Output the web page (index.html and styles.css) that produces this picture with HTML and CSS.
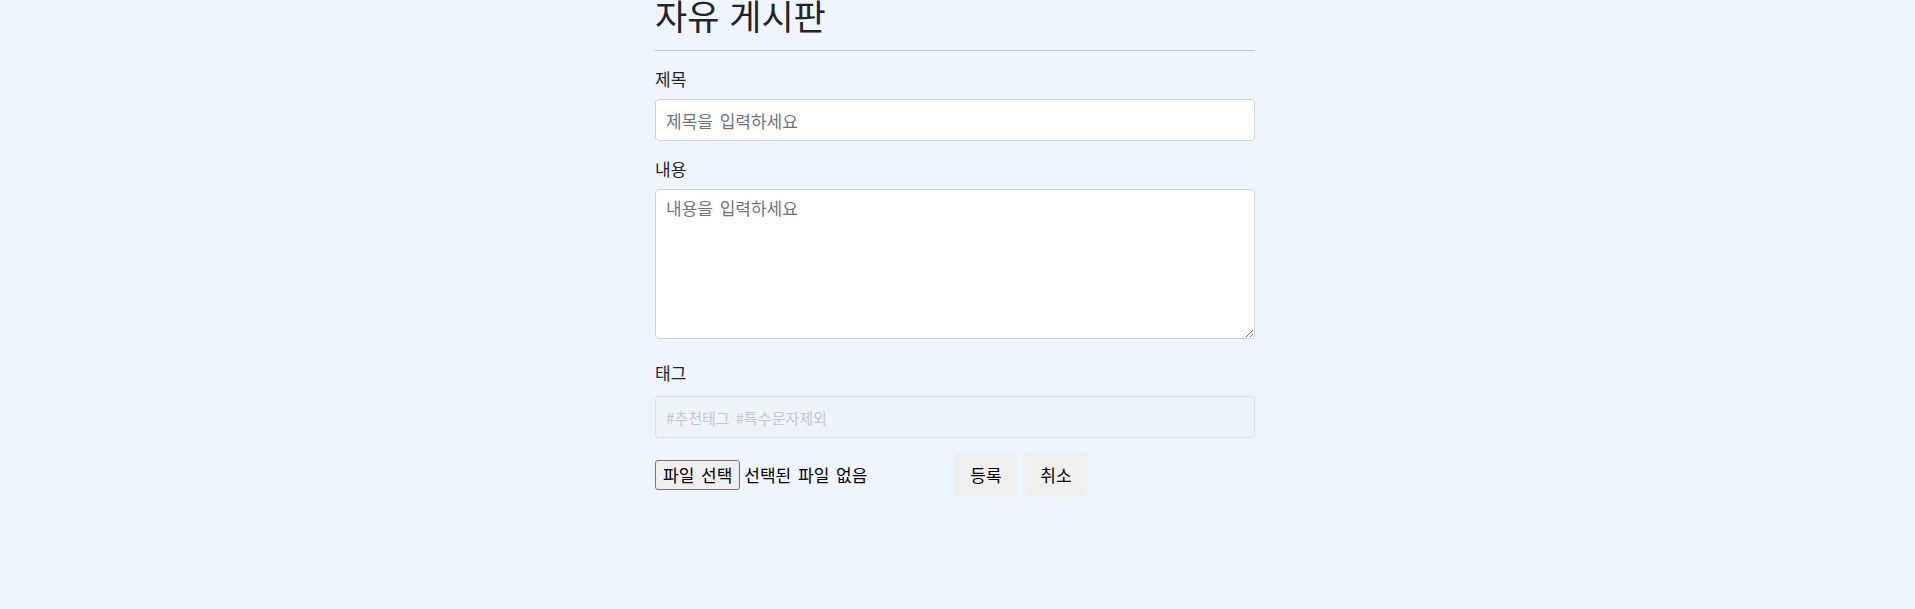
FILE: index.html
```html
<!DOCTYPE html>
<html lang="ko">
<head>
<meta charset="utf-8">
<title>자유 게시판</title>
<link rel="stylesheet" href="styles.css">
</head>
<body>
<main class="board">
  <h2 class="board-title">자유 게시판</h2>
  <hr class="divider">
  <form class="post-form">
    <div class="field">
      <label class="field-label" for="title">제목</label>
      <input class="control" id="title" type="text" placeholder="제목을 입력하세요">
    </div>
    <div class="field field-area">
      <label class="field-label" for="content">내용</label>
      <textarea class="control control-area" id="content" placeholder="내용을 입력하세요"></textarea>
    </div>
    <div class="field field-tag">
      <label class="field-label label-tag" for="tags">태그</label>
      <input class="control control-tag" id="tags" type="text" placeholder="#추천태그 #특수문자제외">
    </div>
    <div class="actions">
      <div class="file-picker">
        <button type="button" class="file-button">파일 선택</button>
        <span class="file-name">선택된 파일 없음</span>
      </div>
      <button type="button" class="action-btn">등록</button>
      <button type="button" class="action-btn">취소</button>
    </div>
  </form>
</main>
</body>
</html>
```

FILE: styles.css
```css
html, body {
  margin: 0;
  padding: 0;
  background: #eef5fc;
}

body {
  font-family: "Noto Sans CJK KR", "Liberation Sans", sans-serif;
  color: #212529;
  font-size: 17px;
  line-height: 24px;
  word-spacing: 2px;
  min-height: 609px;
}

.board {
  width: 600px;
  margin: 0 0 0 calc(50% - 302.5px);
}

.board-title {
  margin: -3px 0 0 0;
  font-size: 35px;
  line-height: 36px;
  font-weight: 400;
  word-spacing: 0;
  color: #212529;
}

.divider {
  margin: 17px 0 16px 0;
  border: 0;
  border-top: 1px solid #bfc4c9;
  height: 0;
}

.post-form {
  display: flex;
  flex-direction: column;
}

.field {
  display: flex;
  flex-direction: column;
  margin-bottom: 16px;
}

.field-area {
  margin-bottom: 22px;
}

.field-tag {
  margin-bottom: 15px;
}

.field-label {
  display: block;
  font-size: 17px;
  line-height: 24px;
  margin-bottom: 8px;
  color: #212529;
}

.label-tag {
  margin-bottom: 11px;
}

.control {
  box-sizing: border-box;
  display: block;
  width: 100%;
  height: 42px;
  margin: 0;
  padding: 6px 10px;
  font-family: inherit;
  font-size: 17px;
  line-height: 24px;
  word-spacing: 2px;
  color: #495057;
  background: #fff;
  border: 1px solid #ced4da;
  border-radius: 4px;
  outline: none;
}

.control::placeholder {
  color: #6c757d;
  opacity: 1;
}

.control-area {
  height: 150px;
  padding: 6px 10px;
  resize: vertical;
}

.control-tag {
  background: #eff4f9;
  border-color: #dde1e5;
  font-size: 15px;
}

.control-tag::placeholder {
  color: #c4c8cc;
}

.actions {
  display: flex;
  align-items: center;
  gap: 8px;
  height: 44px;
}

.file-picker {
  display: flex;
  align-items: center;
  width: 292px;
}

.file-button {
  box-sizing: border-box;
  height: 30px;
  padding: 0 7px;
  margin: 0 4px 0 0;
  font-family: inherit;
  font-size: 17px;
  line-height: 24px;
  word-spacing: 2px;
  color: #000;
  background: #efefef;
  border: 1px solid #767676;
  border-radius: 3px;
}

.file-name {
  font-size: 17px;
  line-height: 24px;
  color: #000;
  white-space: nowrap;
}

.action-btn {
  box-sizing: border-box;
  width: 62px;
  height: 44px;
  padding: 10px 0;
  font-family: inherit;
  font-size: 17px;
  line-height: 24px;
  color: #000;
  background: #efefef;
  border: 0;
  border-radius: 4px;
}
```
